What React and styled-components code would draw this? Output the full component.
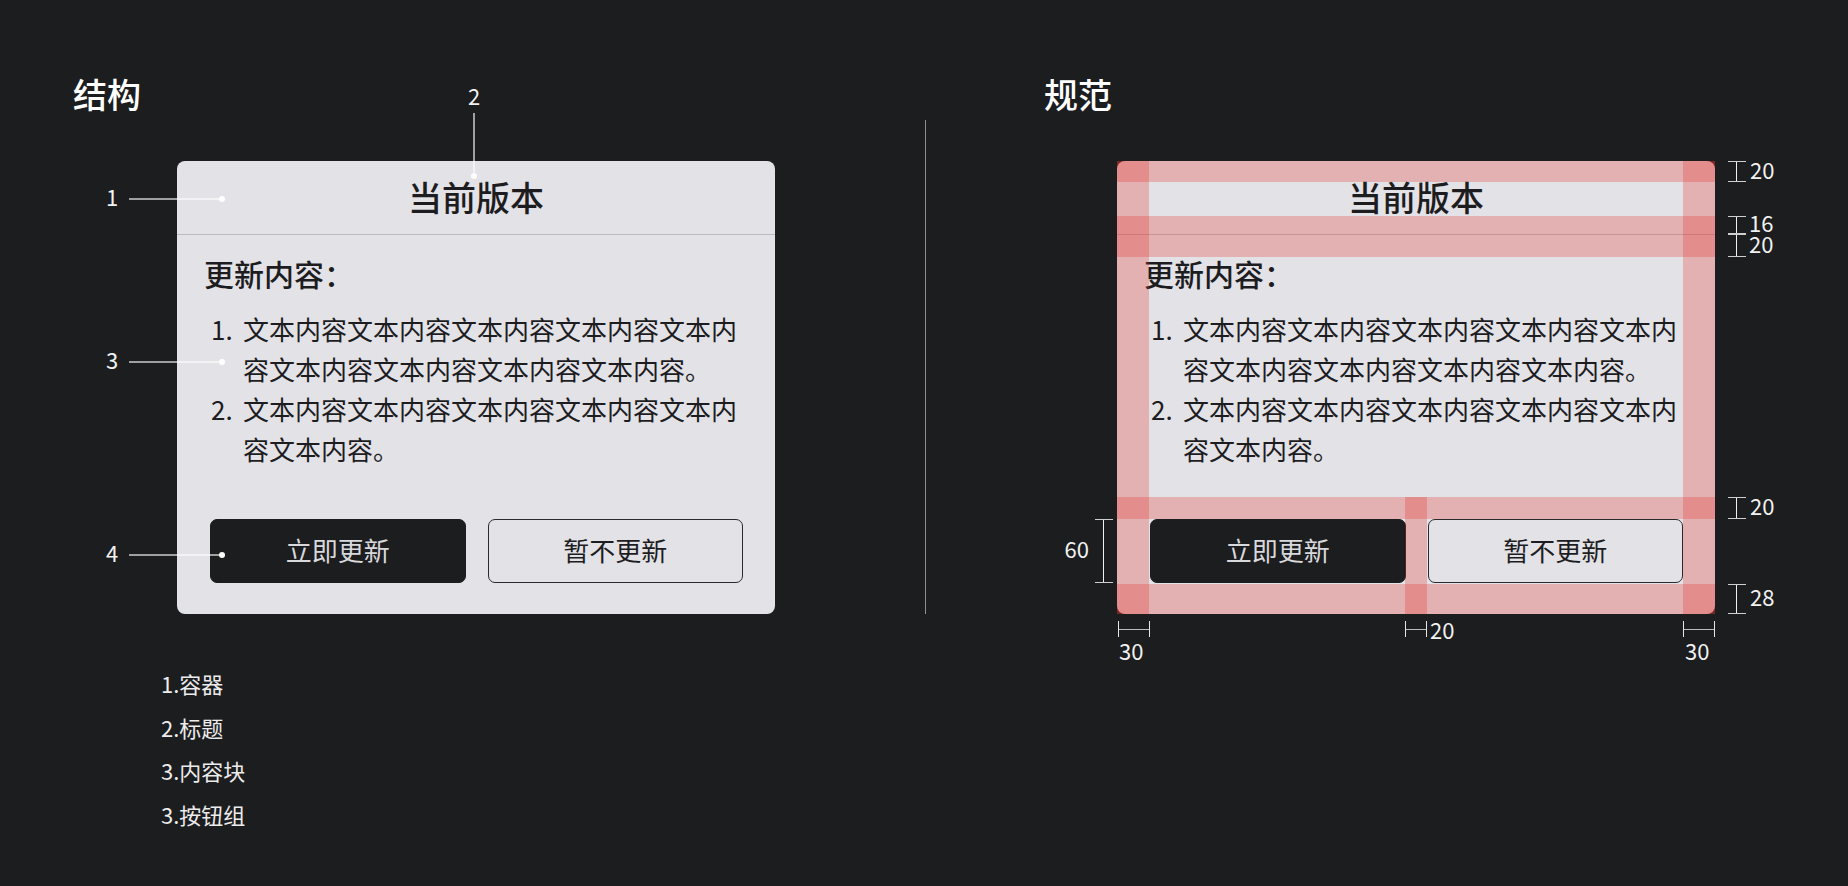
import React from 'react';
import styled, { createGlobalStyle } from 'styled-components';

const FONT = `"Noto Sans CJK SC", "Noto Sans", sans-serif`;

const GlobalStyle = createGlobalStyle`
  html, body { margin: 0; padding: 0; background: #1c1d1f; }
  body { font-family: ${FONT}; }
  * { box-sizing: border-box; }
`;

const Page = styled.div`
  width: 1848px;
  height: 886px;
  display: flex;
  background: #1c1d1f;
  overflow: hidden;
  font-family: ${FONT};
`;

const Pane = styled.section`
  flex: ${p => (p.$grow ? '1' : 'none')};
  width: ${p => (p.$grow ? 'auto' : '925px')};
  display: flex;
  flex-direction: column;
  align-items: flex-start;
  padding: 77px 0 0 ${p => p.$padLeft}px;
`;

const SectionTitle = styled.h2`
  margin: 0;
  font-size: 34px;
  line-height: 34px;
  font-weight: 500;
  color: #ffffff;
`;

const Divider = styled.div`
  flex: none;
  width: 1px;
  height: 494px;
  margin-top: 120px;
  background: #8e8e90;
`;

const Stage = styled.div`
  position: relative;
  width: 598px;
  margin-top: 50px;
  margin-left: ${p => p.$offset}px;
`;

/* ---------- dialog ---------- */
const Card = styled.div`
  width: 598px;
  background: #e3e2e7;
  border-radius: 8px;
  display: flex;
  flex-direction: column;
  color: #1d1d1f;
`;

const Header = styled.div`
  padding: 19px 0 20px;
  border-bottom: 1px solid #bcbbc0;
  text-align: center;
  font-size: 34px;
  line-height: 34px;
  font-weight: 500;
`;

const Body = styled.div`
  padding: 18px 32px 28px 27px;
`;

const BodyTitle = styled.div`
  font-size: 30px;
  line-height: 40px;
  font-weight: 500;
`;

const List = styled.ol`
  margin: 16px 0 0;
  padding: 0;
  list-style: none;
`;

const Item = styled.li`
  display: flex;
  font-size: 26px;
  line-height: 40px;
`;

const Num = styled.span`
  flex: none;
  width: 39px;
  padding-left: 7px;
`;

const ItemText = styled.span`
  flex: 1;
  min-width: 0;
`;

const Footer = styled.div`
  display: flex;
  gap: 22px;
  padding: 22px 32px 31px 33px;
`;

const Button = styled.button`
  flex: 1;
  height: 64px;
  border-radius: 7px;
  font-family: ${FONT};
  font-size: 26px;
  line-height: 1;
  padding: 0 0 2px;
  cursor: pointer;
  background: ${p => (p.$primary ? '#1c1d1f' : 'transparent')};
  color: ${p => (p.$primary ? '#d9d8dd' : '#1d1d1f')};
  border: 1px solid ${p => (p.$primary ? '#1c1d1f' : '#2a2a2c')};
`;

/* ---------- structure callouts (over the dialog) ---------- */
const Callout = styled.div`
  position: absolute;
  left: -71px;
  top: ${p => p.$y - 11}px;
  height: 22px;
  display: flex;
  align-items: center;
  gap: 11px;
`;

const Callout2 = styled.div`
  position: absolute;
  left: 281px;
  top: -74px;
  width: 32px;
  display: flex;
  flex-direction: column;
  align-items: center;
  gap: 4px;
`;

const Tag = styled.span`
  font-size: 22px;
  line-height: 22px;
  color: #f2f2f2;
  transform: translateY(-3px);
`;

const Leader = styled.div`
  position: relative;
  flex: none;
  width: ${p => (p.$vertical ? '2px' : '93px')};
  height: ${p => (p.$vertical ? '63px' : '2px')};
  background: rgba(255, 255, 255, 0.58);
  &::after {
    content: '';
    position: absolute;
    width: 6px;
    height: 6px;
    border-radius: 50%;
    background: #ffffff;
    ${p => (p.$vertical ? 'left: -2px; bottom: -3px;' : 'right: -3px; top: -2px;')}
  }
`;

const Legend = styled.ul`
  margin: 48px 0 0 88px;
  padding: 0;
  list-style: none;
  color: #ececec;
  font-size: 22px;
  line-height: 43.5px;
`;

/* ---------- spec overlay ---------- */
const Band = styled.div`
  position: absolute;
  left: ${p => p.$left}px;
  top: ${p => p.$top}px;
  width: ${p => p.$width}px;
  height: ${p => p.$height}px;
  background: rgba(228, 52, 44, 0.28);
  pointer-events: none;
`;

const VDim = styled.div`
  position: absolute;
  top: ${p => p.$top}px;
  height: ${p => p.$height}px;
  ${p => (p.$side === 'left' ? 'right: calc(100% + 4px);' : 'left: 611px;')}
  display: flex;
  flex-direction: ${p => (p.$side === 'left' ? 'row-reverse' : 'row')};
  align-items: center;
  gap: ${p => (p.$side === 'left' ? '6px' : '3px')};
`;

const VBracket = styled.div`
  position: relative;
  flex: none;
  width: 18px;
  align-self: stretch;
  border-top: 1px solid #cfcfcf;
  border-bottom: 1px solid #cfcfcf;
  &::before {
    content: '';
    position: absolute;
    left: 8px;
    top: 0;
    bottom: 0;
    width: 1px;
    background: #f0f0f0;
  }
`;

const HDim = styled.div`
  position: absolute;
  top: 460px;
  left: ${p => p.$left}px;
  display: flex;
  flex-direction: ${p => (p.$inline ? 'row' : 'column')};
  align-items: flex-start;
  gap: ${p => (p.$inline ? '3px' : '2px')};
`;

const HBracket = styled.div`
  position: relative;
  flex: none;
  width: ${p => p.$width}px;
  height: 16px;
  border-left: 1px solid #e6e6e6;
  border-right: 1px solid #e6e6e6;
  &::before {
    content: '';
    position: absolute;
    left: 0;
    right: 0;
    top: 8px;
    height: 1px;
    background: #bdbdbd;
  }
`;

const DimLabel = styled.span`
  font-size: 22px;
  line-height: 22px;
  color: #f2f2f2;
  white-space: nowrap;
  transform: translate(${p => p.$dx || 0}px, ${p => p.$dy ?? -3}px);
`;

const unit = '文本内容';
const items = [unit.repeat(9) + '。', unit.repeat(6) + '。'];

function Dialog() {
  return (
    <Card>
      <Header>当前版本</Header>
      <Body>
        <BodyTitle>更新内容：</BodyTitle>
        <List>
          {items.map((t, i) => (
            <Item key={i}>
              <Num>{i + 1}.</Num>
              <ItemText>{t}</ItemText>
            </Item>
          ))}
        </List>
      </Body>
      <Footer>
        <Button $primary>立即更新</Button>
        <Button>暂不更新</Button>
      </Footer>
    </Card>
  );
}

const bands = [
  { left: 0, top: 0, width: 598, height: 21 },
  { left: 0, top: 55, width: 598, height: 18 },
  { left: 0, top: 73, width: 598, height: 23 },
  { left: 0, top: 336, width: 598, height: 22 },
  { left: 0, top: 423, width: 598, height: 30 },
  { left: 0, top: 0, width: 32, height: 453 },
  { left: 566, top: 0, width: 32, height: 453 },
  { left: 288, top: 336, width: 22, height: 117 },
];

const rightDims = [
  { top: 0, height: 21, label: '20', dx: 1 },
  { top: 55, height: 18, label: '16', dx: 0 },
  { top: 73, height: 23, label: '20', dx: 0 },
  { top: 336, height: 22, label: '20', dx: 1 },
  { top: 423, height: 30, label: '28', dx: 1 },
];

const callouts = [
  { n: '1', y: 38 },
  { n: '3', y: 201 },
  { n: '4', y: 394 },
];

export default function App() {
  return (
    <Page>
      <GlobalStyle />
      <Pane $padLeft={73}>
        <SectionTitle>结构</SectionTitle>
        <Stage $offset={104}>
          <Dialog />
          {callouts.map(c => (
            <Callout key={c.n} $y={c.y}>
              <Tag>{c.n}</Tag>
              <Leader />
            </Callout>
          ))}
          <Callout2>
            <Tag>2</Tag>
            <Leader $vertical />
          </Callout2>
        </Stage>
        <Legend>
          <li>1.容器</li>
          <li>2.标题</li>
          <li>3.内容块</li>
          <li>3.按钮组</li>
        </Legend>
      </Pane>
      <Divider />
      <Pane $grow $padLeft={118}>
        <SectionTitle>规范</SectionTitle>
        <Stage $offset={73}>
          <Dialog />
          {bands.map((b, i) => (
            <Band key={i} $left={b.left} $top={b.top} $width={b.width} $height={b.height} />
          ))}
          {rightDims.map((d, i) => (
            <VDim key={i} $top={d.top} $height={d.height}>
              <VBracket />
              <DimLabel $dx={d.dx}>{d.label}</DimLabel>
            </VDim>
          ))}
          <VDim $side="left" $top={358} $height={64}>
            <VBracket />
            <DimLabel>60</DimLabel>
          </VDim>
          <HDim $left={1}>
            <HBracket $width={32} />
            <DimLabel $dx={1} $dy={0}>30</DimLabel>
          </HDim>
          <HDim $left={288} $inline>
            <HBracket $width={22} />
            <DimLabel $dy={-3}>20</DimLabel>
          </HDim>
          <HDim $left={566}>
            <HBracket $width={32} />
            <DimLabel $dx={2} $dy={0}>30</DimLabel>
          </HDim>
        </Stage>
      </Pane>
    </Page>
  );
}
